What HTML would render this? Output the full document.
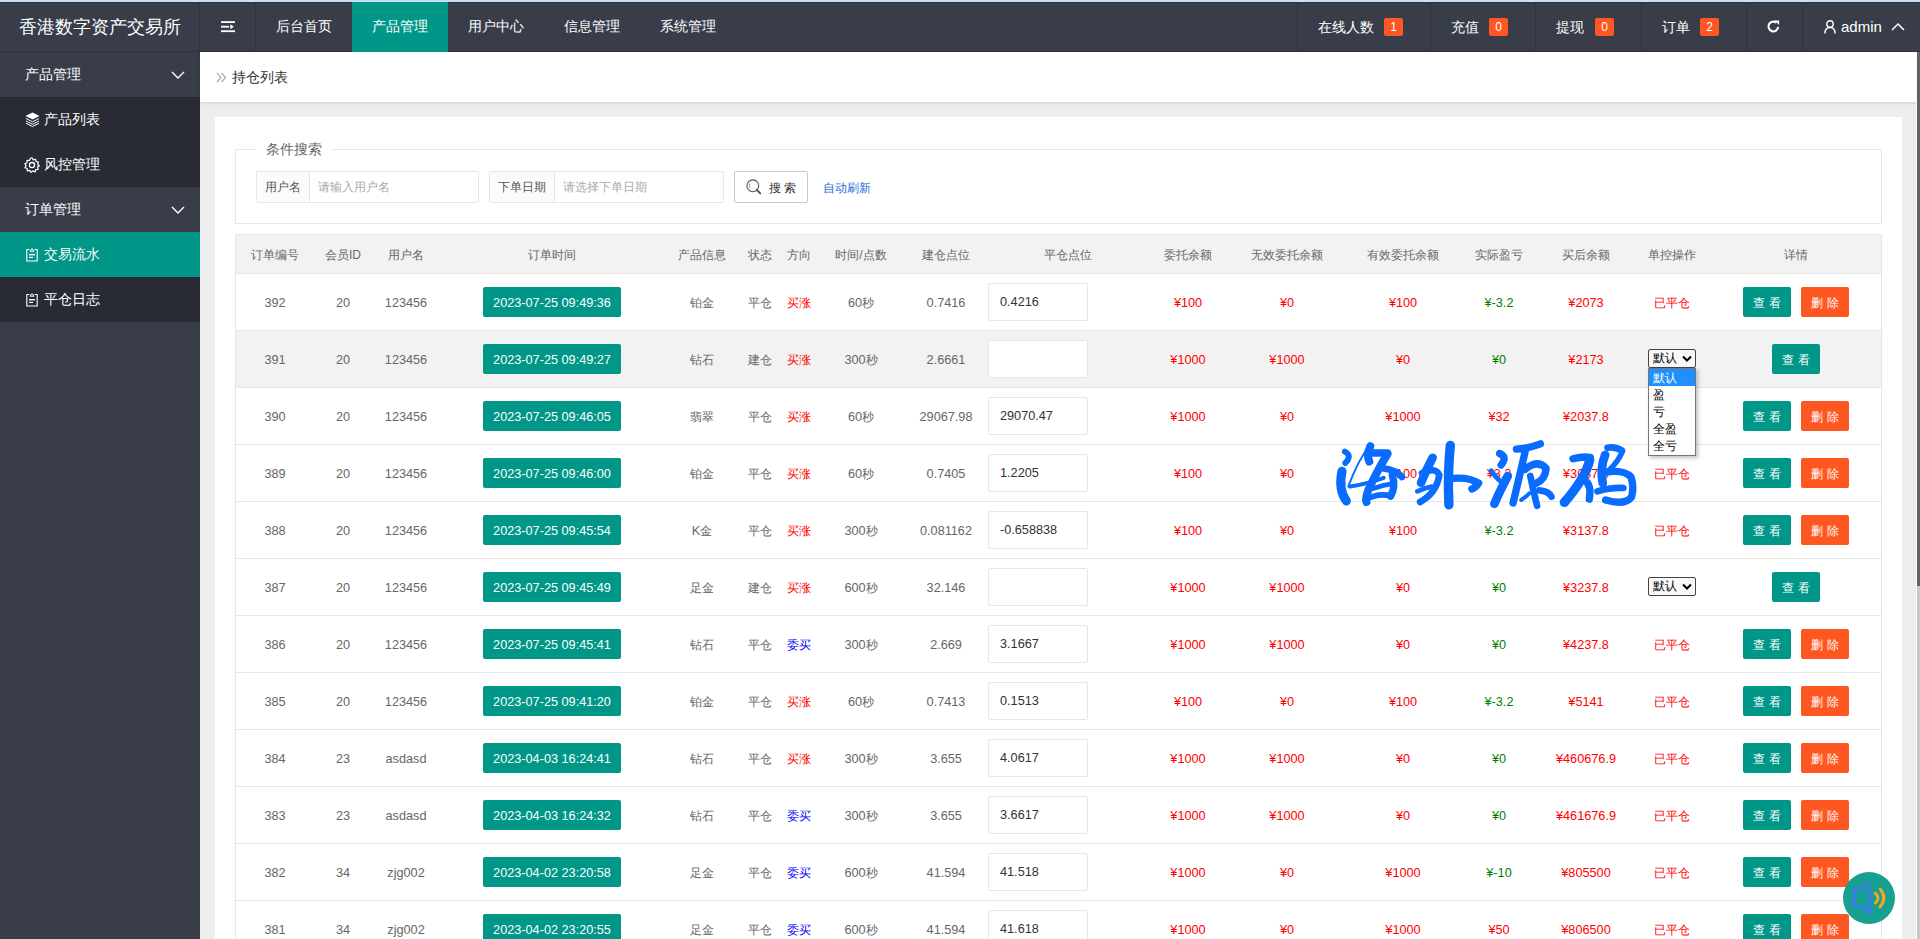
<!DOCTYPE html>
<html><head><meta charset="utf-8">
<style>
*{margin:0;padding:0;box-sizing:border-box}
html,body{width:1920px;height:939px;overflow:hidden;background:#ededed;font-family:"Liberation Sans",sans-serif;color:#666}
.abs{position:absolute}
#topstrip{position:absolute;left:0;top:0;width:1920px;height:2px;background:#cbdcf6}
#hdr{position:absolute;left:0;top:2px;width:1920px;height:50px;background:#393D49;border-top:1px solid #30333d;border-bottom:1px solid #30333d}
#hdr .logo{position:absolute;left:19px;top:0;height:49px;line-height:49px;font-size:18px;color:#fff;white-space:nowrap}
.sep{position:absolute;top:0;width:1px;height:49px;background:#30333d}
.nav{position:absolute;top:-1px;height:50px;line-height:49px;width:96px;text-align:center;color:#fff;font-size:14px}
.nav.on{background:#009688}
.rt{position:absolute;top:0;height:49px;line-height:49px;color:#fff;font-size:14px;white-space:nowrap}
.badge{position:absolute;top:15px;width:19px;height:18px;line-height:18px;background:#FF5722;color:#fff;font-size:12px;text-align:center;border-radius:2px}
#side{position:absolute;left:0;top:52px;width:200px;height:887px;background:#393D49}
.sg{position:absolute;left:0;width:200px;height:45px;line-height:45px;color:#fff;font-size:14px;padding-left:25px;background:#393D49}
.si{position:absolute;left:0;width:200px;height:45px;line-height:45px;color:#fff;font-size:14px;padding-left:44px;background:#282B33}
.si.on{background:#009688}
#crumb{position:absolute;left:200px;top:52px;width:1717px;height:50px;background:#fff;box-shadow:0 1px 3px rgba(0,0,0,.12)}
#card{position:absolute;left:215px;top:117px;width:1687px;height:830px;background:#fff}
#fs{position:absolute;left:235px;top:149px;width:1647px;height:75px;border:1px solid #e6e6e6}
#legend{position:absolute;left:256px;top:139px;padding:0 10px;background:#fff;font-size:14px;color:#666;line-height:20px}
.ig{position:absolute;top:171px;height:32px;border:1px solid #e6e6e6;border-radius:2px;background:#fff}
.ig .lb{position:absolute;left:0;top:0;height:30px;line-height:30px;background:#fbfbfb;border-right:1px solid #e6e6e6;font-size:12px;color:#555;text-align:center}
.ig .ph{position:absolute;top:0;height:30px;line-height:30px;font-size:12px;color:#aaa}
#sbtn{position:absolute;left:734px;top:171px;width:74px;height:32px;border:1px solid #c9c9c9;border-radius:2px;background:#fff;font-size:12px;color:#333;line-height:30px}
#auto{position:absolute;left:823px;top:178px;font-size:12px;color:#1E6FD9;line-height:20px}
#tbl{position:absolute;left:235px;top:234px;width:1647px;height:720px;border:1px solid #e6e6e6;border-bottom:none;background:#fff}
#thead{position:absolute;left:236px;top:235px;width:1645px;height:39px;background:#f2f2f2;border-bottom:1px solid #e6e6e6}
.tr{position:absolute;left:236px;width:1645px;height:57px;border-bottom:1px solid #e6e6e6;background:#fff}
.tr.hov{background:#f2f2f2}
.c{position:absolute;width:200px;text-align:center;font-size:12.7px;color:#666;white-space:nowrap}
.c.th{font-size:12px;color:#666}
.cj{font-size:12px}
.red{color:#f00 !important}
.green{color:#008000 !important}
.blue{color:#00f !important}
.dt{position:absolute;left:483px;width:138px;height:30px;line-height:32px;background:#009688;color:#fff;font-size:12.7px;text-align:center;border-radius:2px;white-space:nowrap}
.inp{position:absolute;left:988px;width:100px;height:38px;line-height:37px;border:1px solid #e6e6e6;border-radius:2px;background:#fff;font-size:12.7px;color:#333;padding-left:11px}
.btn{position:absolute;width:48px;height:30px;line-height:32px;color:#fff;font-size:12px;text-align:center;border-radius:2px}
.btn.g{background:#009688}
.btn.o{background:#FF5722}
.sel{position:absolute;left:1648px;width:48px;height:19px;border:1px solid #444;border-radius:2px;background:#f8f8f8;font-size:12px;color:#000;line-height:17px;padding-left:4px}
.sel svg{position:absolute;right:3px;top:5px}
#dd{position:absolute;left:1648px;top:368px;width:48px;height:88px;border:1px solid #767676;background:#fff;box-shadow:2px 2px 4px rgba(0,0,0,.25);font-size:12px;color:#000}
#dd div{height:17px;line-height:19px;padding-left:4px}
#dd .hl{background:#1E90FF;color:#fff}
#spk{position:absolute;left:1843px;top:872px;width:52px;height:52px;border-radius:50%;background:#17a08f}
#sb{position:absolute;left:1917px;top:52px;width:3px;height:534px;background:#636363}
#sbt{position:absolute;left:1917px;top:586px;width:3px;height:353px;background:#c9c9c9}
#sbl{position:absolute;left:1916px;top:52px;width:1px;height:887px;background:#f8f8f8}
</style></head><body>
<div id="topstrip"></div>
<div id="hdr">
  <div class="logo">香港数字资产交易所</div>
  <div class="sep" style="left:199px"></div>
  <svg class="abs" style="left:221px;top:18px" width="15" height="12" viewBox="0 0 15 12"><rect x="0" y="0.2" width="14" height="1.8" fill="#fff"/><rect x="0" y="4.8" width="8" height="1.8" fill="#fff"/><path d="M9.3 3.2 L12.8 5.7 L9.3 8.2Z" fill="#fff"/><rect x="0" y="9.3" width="14" height="1.8" fill="#fff"/></svg>
  <div class="sep" style="left:255px"></div>
  <div class="nav" style="left:256px">后台首页</div>
  <div class="nav on" style="left:352px">产品管理</div>
  <div class="nav" style="left:448px">用户中心</div>
  <div class="nav" style="left:544px">信息管理</div>
  <div class="nav" style="left:640px">系统管理</div>
  <div class="sep" style="left:1297px"></div>
  <div class="rt" style="left:1318px">在线人数</div><div class="badge" style="left:1384px">1</div>
  <div class="sep" style="left:1430px"></div>
  <div class="rt" style="left:1451px">充值</div><div class="badge" style="left:1489px">0</div>
  <div class="sep" style="left:1535px"></div>
  <div class="rt" style="left:1556px">提现</div><div class="badge" style="left:1595px">0</div>
  <div class="sep" style="left:1641px"></div>
  <div class="rt" style="left:1662px">订单</div><div class="badge" style="left:1700px">2</div>
  <div class="sep" style="left:1746px"></div>
  <svg class="abs" style="left:1766px;top:16px" width="15" height="15" viewBox="0 0 16 16"><path d="M13 8.5 A5.2 5.2 0 1 1 11 3.9" stroke="#fff" stroke-width="2.2" fill="none"/><path d="M9 1.5 L14 1.5 L14 6.5Z" fill="#fff"/></svg>
  <div class="sep" style="left:1802px"></div>
  <svg class="abs" style="left:1824px;top:17px" width="12" height="14" viewBox="0 0 12 14"><circle cx="6" cy="4" r="3.2" stroke="#fff" stroke-width="1.4" fill="none"/><path d="M1 13.5 C1 9 3 7.5 6 7.5 C9 7.5 11 9 11 13.5" stroke="#fff" stroke-width="1.4" fill="none"/></svg>
  <div class="rt" style="left:1841px;top:-1px;font-size:15px">admin</div>
  <svg class="abs" style="left:1891px;top:19px" width="14" height="9" viewBox="0 0 14 9"><path d="M1 8 L7 2 L13 8" stroke="#fff" stroke-width="1.5" fill="none"/></svg>
</div>
<div id="side">
  <div class="sg" style="top:0">产品管理</div>
  <svg class="abs" style="left:171px;top:19px" width="14" height="8" viewBox="0 0 14 8"><path d="M1 1 L7 7 L13 1" stroke="#fff" stroke-width="1.4" fill="none"/></svg>
  <div class="si" style="top:45px">产品列表</div>
  <div class="si" style="top:90px">风控管理</div>
  <div class="sg" style="top:135px">订单管理</div>
  <svg class="abs" style="left:171px;top:154px" width="14" height="8" viewBox="0 0 14 8"><path d="M1 1 L7 7 L13 1" stroke="#fff" stroke-width="1.4" fill="none"/></svg>
  <div class="si on" style="top:180px">交易流水</div>
  <div class="si" style="top:225px">平仓日志</div>
  <svg class="abs" style="left:25px;top:60px" width="15" height="15" viewBox="0 0 15 15"><path d="M7.5 0.5 L14.5 4 L7.5 7.5 L0.5 4Z" fill="#fff"/><path d="M1 6.5 L7.5 9.8 L14 6.5 M1 9 L7.5 12.3 L14 9 M1 11.3 L7.5 14.5 L14 11.3" stroke="#fff" stroke-width="1" fill="none"/></svg>
  <svg class="abs" style="left:24px;top:105px" width="16" height="16" viewBox="0 0 16 16"><path d="M8 0.8 L9.3 2.9 L11.6 2.2 L12 4.6 L14.4 5 L13.6 7.3 L15.4 8.8 L13.6 10.1 L14.2 12.5 L11.8 12.7 L11.1 15 L8.9 13.9 L7.1 15.4 L5.8 13.4 L3.4 13.9 L3.2 11.5 L0.9 10.8 L2.1 8.7 L0.8 6.7 L3 5.8 L3 3.4 L5.4 3.5 L6.4 1.3Z" stroke="#fff" stroke-width="1.2" fill="none" stroke-linejoin="round"/><circle cx="8" cy="8.1" r="2.6" stroke="#fff" stroke-width="1.3" fill="none"/></svg>
  <svg class="abs" style="left:26px;top:196px" width="12" height="14" viewBox="0 0 12 14"><path d="M3.5 1.5 L0.8 1.5 L0.8 13 L11.2 13 L11.2 1.5 L8.5 1.5" stroke="#fff" stroke-width="1.1" fill="none"/><path d="M4 3.2 L6 0.6 L8 3.2Z" stroke="#fff" stroke-width="1" fill="none"/><rect x="3" y="6" width="6" height="1.4" fill="#fff"/><rect x="3" y="8.8" width="4" height="1.2" fill="#fff"/></svg>
  <svg class="abs" style="left:26px;top:241px" width="12" height="14" viewBox="0 0 12 14"><path d="M3.5 1.5 L0.8 1.5 L0.8 13 L11.2 13 L11.2 1.5 L8.5 1.5" stroke="#fff" stroke-width="1.1" fill="none"/><path d="M4 3.2 L6 0.6 L8 3.2Z" stroke="#fff" stroke-width="1" fill="none"/><rect x="3" y="6" width="6" height="1.4" fill="#fff"/><rect x="3" y="8.8" width="4" height="1.2" fill="#fff"/></svg>
</div>
<div id="crumb">
  <svg class="abs" style="left:16px;top:20px" width="11" height="11" viewBox="0 0 11 11"><path d="M1 1 L5 5.5 L1 10 M5.5 1 L9.5 5.5 L5.5 10" stroke="#aaa" stroke-width="1.2" fill="none"/></svg>
  <div class="abs" style="left:32px;top:14px;font-size:14px;line-height:22px;color:#333">持仓列表</div>
</div>
<div id="card"></div>
<div id="fs"></div>
<div id="legend">条件搜索</div>
<div class="ig" style="left:256px;width:223px"><div class="lb" style="width:53px">用户名</div><div class="ph" style="left:61px">请输入用户名</div></div>
<div class="ig" style="left:489px;width:235px"><div class="lb" style="width:65px">下单日期</div><div class="ph" style="left:73px">请选择下单日期</div></div>
<div id="sbtn"><svg class="abs" style="left:11px;top:-2px" width="16" height="40" viewBox="0 0 16 40"><g transform="translate(0,9)"><circle cx="6.8" cy="6.8" r="5.9" stroke="#555" stroke-width="1.1" fill="none"/><path d="M3.8 4.8 Q3 6.6 3.9 8.6" stroke="#777" stroke-width="0.9" fill="none"/><path d="M10.9 11 L14.2 14.4" stroke="#555" stroke-width="1.9" stroke-linecap="round"/></g></svg><span class="abs" style="left:34px;top:1px">搜 索</span></div>
<div id="auto">自动刷新</div>
<div id="tbl"></div>
<div id="thead"></div>
<div class="c th" style="left:175px;top:235px;height:39px;line-height:41px"><span class="cj">订单编号</span></div>
<div class="c th" style="left:243px;top:235px;height:39px;line-height:41px"><span class="cj">会员</span>ID</div>
<div class="c th" style="left:306px;top:235px;height:39px;line-height:41px"><span class="cj">用户名</span></div>
<div class="c th" style="left:452px;top:235px;height:39px;line-height:41px"><span class="cj">订单时间</span></div>
<div class="c th" style="left:602px;top:235px;height:39px;line-height:41px"><span class="cj">产品信息</span></div>
<div class="c th" style="left:660px;top:235px;height:39px;line-height:41px"><span class="cj">状态</span></div>
<div class="c th" style="left:699px;top:235px;height:39px;line-height:41px"><span class="cj">方向</span></div>
<div class="c th" style="left:761px;top:235px;height:39px;line-height:41px"><span class="cj">时间</span>/<span class="cj">点数</span></div>
<div class="c th" style="left:846px;top:235px;height:39px;line-height:41px"><span class="cj">建仓点位</span></div>
<div class="c th" style="left:968px;top:235px;height:39px;line-height:41px"><span class="cj">平仓点位</span></div>
<div class="c th" style="left:1088px;top:235px;height:39px;line-height:41px"><span class="cj">委托余额</span></div>
<div class="c th" style="left:1187px;top:235px;height:39px;line-height:41px"><span class="cj">无效委托余额</span></div>
<div class="c th" style="left:1303px;top:235px;height:39px;line-height:41px"><span class="cj">有效委托余额</span></div>
<div class="c th" style="left:1399px;top:235px;height:39px;line-height:41px"><span class="cj">实际盈亏</span></div>
<div class="c th" style="left:1486px;top:235px;height:39px;line-height:41px"><span class="cj">买后余额</span></div>
<div class="c th" style="left:1572px;top:235px;height:39px;line-height:41px"><span class="cj">单控操作</span></div>
<div class="c th" style="left:1696px;top:235px;height:39px;line-height:41px"><span class="cj">详情</span></div>
<div class="tr" style="top:274px"></div>
<div class="c " style="left:175px;top:274px;height:56px;line-height:58px">392</div>
<div class="c " style="left:243px;top:274px;height:56px;line-height:58px">20</div>
<div class="c " style="left:306px;top:274px;height:56px;line-height:58px">123456</div>
<div class="dt" style="top:287px">2023-07-25 09:49:36</div>
<div class="c " style="left:602px;top:274px;height:56px;line-height:58px"><span class="cj">铂金</span></div>
<div class="c " style="left:660px;top:274px;height:56px;line-height:58px"><span class="cj">平仓</span></div>
<div class="c red" style="left:699px;top:274px;height:56px;line-height:58px"><span class="cj">买涨</span></div>
<div class="c " style="left:761px;top:274px;height:56px;line-height:58px">60<span class="cj">秒</span></div>
<div class="c " style="left:846px;top:274px;height:56px;line-height:58px">0.7416</div>
<div class="inp" style="top:283px">0.4216</div>
<div class="c red" style="left:1088px;top:274px;height:56px;line-height:58px">¥100</div>
<div class="c red" style="left:1187px;top:274px;height:56px;line-height:58px">¥0</div>
<div class="c red" style="left:1303px;top:274px;height:56px;line-height:58px">¥100</div>
<div class="c green" style="left:1399px;top:274px;height:56px;line-height:58px">¥-3.2</div>
<div class="c red" style="left:1486px;top:274px;height:56px;line-height:58px">¥2073</div>
<div class="c red" style="left:1572px;top:274px;height:56px;line-height:58px"><span class="cj">已平仓</span></div>
<div class="btn g" style="left:1743px;top:287px">查 看</div>
<div class="btn o" style="left:1801px;top:287px">删 除</div>
<div class="tr hov" style="top:331px"></div>
<div class="c " style="left:175px;top:331px;height:56px;line-height:58px">391</div>
<div class="c " style="left:243px;top:331px;height:56px;line-height:58px">20</div>
<div class="c " style="left:306px;top:331px;height:56px;line-height:58px">123456</div>
<div class="dt" style="top:344px">2023-07-25 09:49:27</div>
<div class="c " style="left:602px;top:331px;height:56px;line-height:58px"><span class="cj">钻石</span></div>
<div class="c " style="left:660px;top:331px;height:56px;line-height:58px"><span class="cj">建仓</span></div>
<div class="c red" style="left:699px;top:331px;height:56px;line-height:58px"><span class="cj">买涨</span></div>
<div class="c " style="left:761px;top:331px;height:56px;line-height:58px">300<span class="cj">秒</span></div>
<div class="c " style="left:846px;top:331px;height:56px;line-height:58px">2.6661</div>
<div class="inp" style="top:340px"></div>
<div class="c red" style="left:1088px;top:331px;height:56px;line-height:58px">¥1000</div>
<div class="c red" style="left:1187px;top:331px;height:56px;line-height:58px">¥1000</div>
<div class="c red" style="left:1303px;top:331px;height:56px;line-height:58px">¥0</div>
<div class="c green" style="left:1399px;top:331px;height:56px;line-height:58px">¥0</div>
<div class="c red" style="left:1486px;top:331px;height:56px;line-height:58px">¥2173</div>
<div class="sel" style="top:349px"><span>默认</span><svg width="10" height="8" viewBox="0 0 10 8"><path d="M1 1.5 L5 5.5 L9 1.5" stroke="#000" stroke-width="2" fill="none"/></svg></div>
<div class="btn g" style="left:1772px;top:344px">查 看</div>
<div class="tr" style="top:388px"></div>
<div class="c " style="left:175px;top:388px;height:56px;line-height:58px">390</div>
<div class="c " style="left:243px;top:388px;height:56px;line-height:58px">20</div>
<div class="c " style="left:306px;top:388px;height:56px;line-height:58px">123456</div>
<div class="dt" style="top:401px">2023-07-25 09:46:05</div>
<div class="c " style="left:602px;top:388px;height:56px;line-height:58px"><span class="cj">翡翠</span></div>
<div class="c " style="left:660px;top:388px;height:56px;line-height:58px"><span class="cj">平仓</span></div>
<div class="c red" style="left:699px;top:388px;height:56px;line-height:58px"><span class="cj">买涨</span></div>
<div class="c " style="left:761px;top:388px;height:56px;line-height:58px">60<span class="cj">秒</span></div>
<div class="c " style="left:846px;top:388px;height:56px;line-height:58px">29067.98</div>
<div class="inp" style="top:397px">29070.47</div>
<div class="c red" style="left:1088px;top:388px;height:56px;line-height:58px">¥1000</div>
<div class="c red" style="left:1187px;top:388px;height:56px;line-height:58px">¥0</div>
<div class="c red" style="left:1303px;top:388px;height:56px;line-height:58px">¥1000</div>
<div class="c red" style="left:1399px;top:388px;height:56px;line-height:58px">¥32</div>
<div class="c red" style="left:1486px;top:388px;height:56px;line-height:58px">¥2037.8</div>
<div class="c red" style="left:1572px;top:388px;height:56px;line-height:58px"><span class="cj">已平仓</span></div>
<div class="btn g" style="left:1743px;top:401px">查 看</div>
<div class="btn o" style="left:1801px;top:401px">删 除</div>
<div class="tr" style="top:445px"></div>
<div class="c " style="left:175px;top:445px;height:56px;line-height:58px">389</div>
<div class="c " style="left:243px;top:445px;height:56px;line-height:58px">20</div>
<div class="c " style="left:306px;top:445px;height:56px;line-height:58px">123456</div>
<div class="dt" style="top:458px">2023-07-25 09:46:00</div>
<div class="c " style="left:602px;top:445px;height:56px;line-height:58px"><span class="cj">铂金</span></div>
<div class="c " style="left:660px;top:445px;height:56px;line-height:58px"><span class="cj">平仓</span></div>
<div class="c red" style="left:699px;top:445px;height:56px;line-height:58px"><span class="cj">买涨</span></div>
<div class="c " style="left:761px;top:445px;height:56px;line-height:58px">60<span class="cj">秒</span></div>
<div class="c " style="left:846px;top:445px;height:56px;line-height:58px">0.7405</div>
<div class="inp" style="top:454px">1.2205</div>
<div class="c red" style="left:1088px;top:445px;height:56px;line-height:58px">¥100</div>
<div class="c red" style="left:1187px;top:445px;height:56px;line-height:58px">¥0</div>
<div class="c red" style="left:1303px;top:445px;height:56px;line-height:58px">¥100</div>
<div class="c red" style="left:1399px;top:445px;height:56px;line-height:58px">¥3.2</div>
<div class="c red" style="left:1486px;top:445px;height:56px;line-height:58px">¥3037.8</div>
<div class="c red" style="left:1572px;top:445px;height:56px;line-height:58px"><span class="cj">已平仓</span></div>
<div class="btn g" style="left:1743px;top:458px">查 看</div>
<div class="btn o" style="left:1801px;top:458px">删 除</div>
<div class="tr" style="top:502px"></div>
<div class="c " style="left:175px;top:502px;height:56px;line-height:58px">388</div>
<div class="c " style="left:243px;top:502px;height:56px;line-height:58px">20</div>
<div class="c " style="left:306px;top:502px;height:56px;line-height:58px">123456</div>
<div class="dt" style="top:515px">2023-07-25 09:45:54</div>
<div class="c " style="left:602px;top:502px;height:56px;line-height:58px">K<span class="cj">金</span></div>
<div class="c " style="left:660px;top:502px;height:56px;line-height:58px"><span class="cj">平仓</span></div>
<div class="c red" style="left:699px;top:502px;height:56px;line-height:58px"><span class="cj">买涨</span></div>
<div class="c " style="left:761px;top:502px;height:56px;line-height:58px">300<span class="cj">秒</span></div>
<div class="c " style="left:846px;top:502px;height:56px;line-height:58px">0.081162</div>
<div class="inp" style="top:511px">-0.658838</div>
<div class="c red" style="left:1088px;top:502px;height:56px;line-height:58px">¥100</div>
<div class="c red" style="left:1187px;top:502px;height:56px;line-height:58px">¥0</div>
<div class="c red" style="left:1303px;top:502px;height:56px;line-height:58px">¥100</div>
<div class="c green" style="left:1399px;top:502px;height:56px;line-height:58px">¥-3.2</div>
<div class="c red" style="left:1486px;top:502px;height:56px;line-height:58px">¥3137.8</div>
<div class="c red" style="left:1572px;top:502px;height:56px;line-height:58px"><span class="cj">已平仓</span></div>
<div class="btn g" style="left:1743px;top:515px">查 看</div>
<div class="btn o" style="left:1801px;top:515px">删 除</div>
<div class="tr" style="top:559px"></div>
<div class="c " style="left:175px;top:559px;height:56px;line-height:58px">387</div>
<div class="c " style="left:243px;top:559px;height:56px;line-height:58px">20</div>
<div class="c " style="left:306px;top:559px;height:56px;line-height:58px">123456</div>
<div class="dt" style="top:572px">2023-07-25 09:45:49</div>
<div class="c " style="left:602px;top:559px;height:56px;line-height:58px"><span class="cj">足金</span></div>
<div class="c " style="left:660px;top:559px;height:56px;line-height:58px"><span class="cj">建仓</span></div>
<div class="c red" style="left:699px;top:559px;height:56px;line-height:58px"><span class="cj">买涨</span></div>
<div class="c " style="left:761px;top:559px;height:56px;line-height:58px">600<span class="cj">秒</span></div>
<div class="c " style="left:846px;top:559px;height:56px;line-height:58px">32.146</div>
<div class="inp" style="top:568px"></div>
<div class="c red" style="left:1088px;top:559px;height:56px;line-height:58px">¥1000</div>
<div class="c red" style="left:1187px;top:559px;height:56px;line-height:58px">¥1000</div>
<div class="c red" style="left:1303px;top:559px;height:56px;line-height:58px">¥0</div>
<div class="c green" style="left:1399px;top:559px;height:56px;line-height:58px">¥0</div>
<div class="c red" style="left:1486px;top:559px;height:56px;line-height:58px">¥3237.8</div>
<div class="sel" style="top:577px"><span>默认</span><svg width="10" height="8" viewBox="0 0 10 8"><path d="M1 1.5 L5 5.5 L9 1.5" stroke="#000" stroke-width="2" fill="none"/></svg></div>
<div class="btn g" style="left:1772px;top:572px">查 看</div>
<div class="tr" style="top:616px"></div>
<div class="c " style="left:175px;top:616px;height:56px;line-height:58px">386</div>
<div class="c " style="left:243px;top:616px;height:56px;line-height:58px">20</div>
<div class="c " style="left:306px;top:616px;height:56px;line-height:58px">123456</div>
<div class="dt" style="top:629px">2023-07-25 09:45:41</div>
<div class="c " style="left:602px;top:616px;height:56px;line-height:58px"><span class="cj">钻石</span></div>
<div class="c " style="left:660px;top:616px;height:56px;line-height:58px"><span class="cj">平仓</span></div>
<div class="c blue" style="left:699px;top:616px;height:56px;line-height:58px"><span class="cj">委买</span></div>
<div class="c " style="left:761px;top:616px;height:56px;line-height:58px">300<span class="cj">秒</span></div>
<div class="c " style="left:846px;top:616px;height:56px;line-height:58px">2.669</div>
<div class="inp" style="top:625px">3.1667</div>
<div class="c red" style="left:1088px;top:616px;height:56px;line-height:58px">¥1000</div>
<div class="c red" style="left:1187px;top:616px;height:56px;line-height:58px">¥1000</div>
<div class="c red" style="left:1303px;top:616px;height:56px;line-height:58px">¥0</div>
<div class="c green" style="left:1399px;top:616px;height:56px;line-height:58px">¥0</div>
<div class="c red" style="left:1486px;top:616px;height:56px;line-height:58px">¥4237.8</div>
<div class="c red" style="left:1572px;top:616px;height:56px;line-height:58px"><span class="cj">已平仓</span></div>
<div class="btn g" style="left:1743px;top:629px">查 看</div>
<div class="btn o" style="left:1801px;top:629px">删 除</div>
<div class="tr" style="top:673px"></div>
<div class="c " style="left:175px;top:673px;height:56px;line-height:58px">385</div>
<div class="c " style="left:243px;top:673px;height:56px;line-height:58px">20</div>
<div class="c " style="left:306px;top:673px;height:56px;line-height:58px">123456</div>
<div class="dt" style="top:686px">2023-07-25 09:41:20</div>
<div class="c " style="left:602px;top:673px;height:56px;line-height:58px"><span class="cj">铂金</span></div>
<div class="c " style="left:660px;top:673px;height:56px;line-height:58px"><span class="cj">平仓</span></div>
<div class="c red" style="left:699px;top:673px;height:56px;line-height:58px"><span class="cj">买涨</span></div>
<div class="c " style="left:761px;top:673px;height:56px;line-height:58px">60<span class="cj">秒</span></div>
<div class="c " style="left:846px;top:673px;height:56px;line-height:58px">0.7413</div>
<div class="inp" style="top:682px">0.1513</div>
<div class="c red" style="left:1088px;top:673px;height:56px;line-height:58px">¥100</div>
<div class="c red" style="left:1187px;top:673px;height:56px;line-height:58px">¥0</div>
<div class="c red" style="left:1303px;top:673px;height:56px;line-height:58px">¥100</div>
<div class="c green" style="left:1399px;top:673px;height:56px;line-height:58px">¥-3.2</div>
<div class="c red" style="left:1486px;top:673px;height:56px;line-height:58px">¥5141</div>
<div class="c red" style="left:1572px;top:673px;height:56px;line-height:58px"><span class="cj">已平仓</span></div>
<div class="btn g" style="left:1743px;top:686px">查 看</div>
<div class="btn o" style="left:1801px;top:686px">删 除</div>
<div class="tr" style="top:730px"></div>
<div class="c " style="left:175px;top:730px;height:56px;line-height:58px">384</div>
<div class="c " style="left:243px;top:730px;height:56px;line-height:58px">23</div>
<div class="c " style="left:306px;top:730px;height:56px;line-height:58px">asdasd</div>
<div class="dt" style="top:743px">2023-04-03 16:24:41</div>
<div class="c " style="left:602px;top:730px;height:56px;line-height:58px"><span class="cj">钻石</span></div>
<div class="c " style="left:660px;top:730px;height:56px;line-height:58px"><span class="cj">平仓</span></div>
<div class="c red" style="left:699px;top:730px;height:56px;line-height:58px"><span class="cj">买涨</span></div>
<div class="c " style="left:761px;top:730px;height:56px;line-height:58px">300<span class="cj">秒</span></div>
<div class="c " style="left:846px;top:730px;height:56px;line-height:58px">3.655</div>
<div class="inp" style="top:739px">4.0617</div>
<div class="c red" style="left:1088px;top:730px;height:56px;line-height:58px">¥1000</div>
<div class="c red" style="left:1187px;top:730px;height:56px;line-height:58px">¥1000</div>
<div class="c red" style="left:1303px;top:730px;height:56px;line-height:58px">¥0</div>
<div class="c green" style="left:1399px;top:730px;height:56px;line-height:58px">¥0</div>
<div class="c red" style="left:1486px;top:730px;height:56px;line-height:58px">¥460676.9</div>
<div class="c red" style="left:1572px;top:730px;height:56px;line-height:58px"><span class="cj">已平仓</span></div>
<div class="btn g" style="left:1743px;top:743px">查 看</div>
<div class="btn o" style="left:1801px;top:743px">删 除</div>
<div class="tr" style="top:787px"></div>
<div class="c " style="left:175px;top:787px;height:56px;line-height:58px">383</div>
<div class="c " style="left:243px;top:787px;height:56px;line-height:58px">23</div>
<div class="c " style="left:306px;top:787px;height:56px;line-height:58px">asdasd</div>
<div class="dt" style="top:800px">2023-04-03 16:24:32</div>
<div class="c " style="left:602px;top:787px;height:56px;line-height:58px"><span class="cj">钻石</span></div>
<div class="c " style="left:660px;top:787px;height:56px;line-height:58px"><span class="cj">平仓</span></div>
<div class="c blue" style="left:699px;top:787px;height:56px;line-height:58px"><span class="cj">委买</span></div>
<div class="c " style="left:761px;top:787px;height:56px;line-height:58px">300<span class="cj">秒</span></div>
<div class="c " style="left:846px;top:787px;height:56px;line-height:58px">3.655</div>
<div class="inp" style="top:796px">3.6617</div>
<div class="c red" style="left:1088px;top:787px;height:56px;line-height:58px">¥1000</div>
<div class="c red" style="left:1187px;top:787px;height:56px;line-height:58px">¥1000</div>
<div class="c red" style="left:1303px;top:787px;height:56px;line-height:58px">¥0</div>
<div class="c green" style="left:1399px;top:787px;height:56px;line-height:58px">¥0</div>
<div class="c red" style="left:1486px;top:787px;height:56px;line-height:58px">¥461676.9</div>
<div class="c red" style="left:1572px;top:787px;height:56px;line-height:58px"><span class="cj">已平仓</span></div>
<div class="btn g" style="left:1743px;top:800px">查 看</div>
<div class="btn o" style="left:1801px;top:800px">删 除</div>
<div class="tr" style="top:844px"></div>
<div class="c " style="left:175px;top:844px;height:56px;line-height:58px">382</div>
<div class="c " style="left:243px;top:844px;height:56px;line-height:58px">34</div>
<div class="c " style="left:306px;top:844px;height:56px;line-height:58px">zjg002</div>
<div class="dt" style="top:857px">2023-04-02 23:20:58</div>
<div class="c " style="left:602px;top:844px;height:56px;line-height:58px"><span class="cj">足金</span></div>
<div class="c " style="left:660px;top:844px;height:56px;line-height:58px"><span class="cj">平仓</span></div>
<div class="c blue" style="left:699px;top:844px;height:56px;line-height:58px"><span class="cj">委买</span></div>
<div class="c " style="left:761px;top:844px;height:56px;line-height:58px">600<span class="cj">秒</span></div>
<div class="c " style="left:846px;top:844px;height:56px;line-height:58px">41.594</div>
<div class="inp" style="top:853px">41.518</div>
<div class="c red" style="left:1088px;top:844px;height:56px;line-height:58px">¥1000</div>
<div class="c red" style="left:1187px;top:844px;height:56px;line-height:58px">¥0</div>
<div class="c red" style="left:1303px;top:844px;height:56px;line-height:58px">¥1000</div>
<div class="c green" style="left:1399px;top:844px;height:56px;line-height:58px">¥-10</div>
<div class="c red" style="left:1486px;top:844px;height:56px;line-height:58px">¥805500</div>
<div class="c red" style="left:1572px;top:844px;height:56px;line-height:58px"><span class="cj">已平仓</span></div>
<div class="btn g" style="left:1743px;top:857px">查 看</div>
<div class="btn o" style="left:1801px;top:857px">删 除</div>
<div class="tr" style="top:901px"></div>
<div class="c " style="left:175px;top:901px;height:56px;line-height:58px">381</div>
<div class="c " style="left:243px;top:901px;height:56px;line-height:58px">34</div>
<div class="c " style="left:306px;top:901px;height:56px;line-height:58px">zjg002</div>
<div class="dt" style="top:914px">2023-04-02 23:20:55</div>
<div class="c " style="left:602px;top:901px;height:56px;line-height:58px"><span class="cj">足金</span></div>
<div class="c " style="left:660px;top:901px;height:56px;line-height:58px"><span class="cj">平仓</span></div>
<div class="c blue" style="left:699px;top:901px;height:56px;line-height:58px"><span class="cj">委买</span></div>
<div class="c " style="left:761px;top:901px;height:56px;line-height:58px">600<span class="cj">秒</span></div>
<div class="c " style="left:846px;top:901px;height:56px;line-height:58px">41.594</div>
<div class="inp" style="top:910px">41.618</div>
<div class="c red" style="left:1088px;top:901px;height:56px;line-height:58px">¥1000</div>
<div class="c red" style="left:1187px;top:901px;height:56px;line-height:58px">¥0</div>
<div class="c red" style="left:1303px;top:901px;height:56px;line-height:58px">¥1000</div>
<div class="c red" style="left:1399px;top:901px;height:56px;line-height:58px">¥50</div>
<div class="c red" style="left:1486px;top:901px;height:56px;line-height:58px">¥806500</div>
<div class="c red" style="left:1572px;top:901px;height:56px;line-height:58px"><span class="cj">已平仓</span></div>
<div class="btn g" style="left:1743px;top:914px">查 看</div>
<div class="btn o" style="left:1801px;top:914px">删 除</div>
<div id="dd"><div class="hl">默认</div><div>盈</div><div>亏</div><div>全盈</div><div>全亏</div></div>
<svg id="wm" width="310" height="90" viewBox="0 0 310 90" style="position:absolute;left:1330px;top:430px">
<g fill="none" stroke="#0a6cff" stroke-linecap="round" stroke-linejoin="round">
<g transform="scale(0.09588)">
<path d="M155,225 Q235,265 160,345" stroke-width="62"/>
<path d="M125,430 Q85,620 170,740" stroke-width="95"/><path d="M450,610 Q560,570 660,560" stroke-width="50"/>
<path d="M190,590 Q300,300 415,160" stroke-width="20"/>
<path d="M420,170 Q380,260 410,330" stroke-width="84"/>
<path d="M450,240 L600,240" stroke-width="77"/>
<path d="M600,250 Q520,380 430,560 Q360,700 380,750" stroke-width="84"/>
<path d="M560,400 Q700,420 750,490" stroke-width="70"/>
<path d="M650,470 Q690,600 630,690" stroke-width="77"/>
<path d="M370,730 Q500,650 640,690" stroke-width="62"/>
<path d="M210,590 Q400,560 560,500" stroke-width="42"/>
<path d="M1070,290 Q1000,420 950,550" stroke-width="91"/>
<path d="M960,450 Q1100,380 1140,470 Q1110,660 940,750" stroke-width="70"/>
<path d="M910,640 Q1000,600 1060,590" stroke-width="49"/>
<path d="M1255,160 Q1225,450 1240,780" stroke-width="98"/>
<path d="M1280,505 Q1450,490 1550,555 Q1520,600 1480,615" stroke-width="77"/>
</g>
<g transform="translate(150,0) scale(0.09588)">
<path d="M205,245 Q290,280 220,365" stroke-width="77"/>
<path d="M115,425 Q170,500 215,535" stroke-width="49"/>
<path d="M150,770 Q200,650 290,480" stroke-width="91"/>
<path d="M380,200 Q500,195 630,145" stroke-width="77"/>
<path d="M470,230 Q420,450 345,760" stroke-width="77"/>
<path d="M470,410 Q600,300 690,400 Q680,520 580,560" stroke-width="77"/>
<path d="M525,480 Q560,650 595,790" stroke-width="70"/>
<path d="M620,630 Q720,640 745,695" stroke-width="70"/>
<path d="M430,730 Q490,690 515,660" stroke-width="42"/>
<path d="M970,300 Q1060,275 1150,285" stroke-width="77"/>
<path d="M1145,310 Q1100,500 880,755" stroke-width="98"/>
<path d="M1090,520 Q1165,570 1140,720" stroke-width="77"/>
<path d="M1330,185 Q1410,170 1480,215" stroke-width="70"/>
<path d="M1305,260 Q1250,400 1280,555" stroke-width="91"/>
<path d="M1485,225 Q1440,330 1345,420" stroke-width="56"/>
<path d="M1310,440 Q1500,410 1575,490 Q1610,600 1580,700 Q1510,790 1310,730" stroke-width="77"/>
<path d="M1225,640 Q1350,600 1495,605" stroke-width="70"/>
</g>
</g></svg>
<div id="spk"><svg width="52" height="52" viewBox="0 0 52 52"><path d="M26,10.8 L18.5,17.2 L13,17.2 Q10.6,17.2 10.6,19.6 L10.6,32 Q10.6,34.4 13,34.4 L18.5,34.4 L26,40.8" stroke="#3B7BF0" stroke-width="3" fill="none" stroke-linejoin="round" stroke-linecap="round"/><path d="M26.6,17 L26.6,41" stroke="#3B7BF0" stroke-width="3" stroke-linecap="round"/><path d="M32.2,21 Q37.8,26 32.4,31" stroke="#F5A623" stroke-width="3" fill="none" stroke-linecap="round"/><path d="M37.2,17 Q44.5,26 37,35" stroke="#F5A623" stroke-width="3" fill="none" stroke-linecap="round"/></svg></div>
<div id="sbl"></div><div id="sb"></div><div id="sbt"></div>
</body></html>
